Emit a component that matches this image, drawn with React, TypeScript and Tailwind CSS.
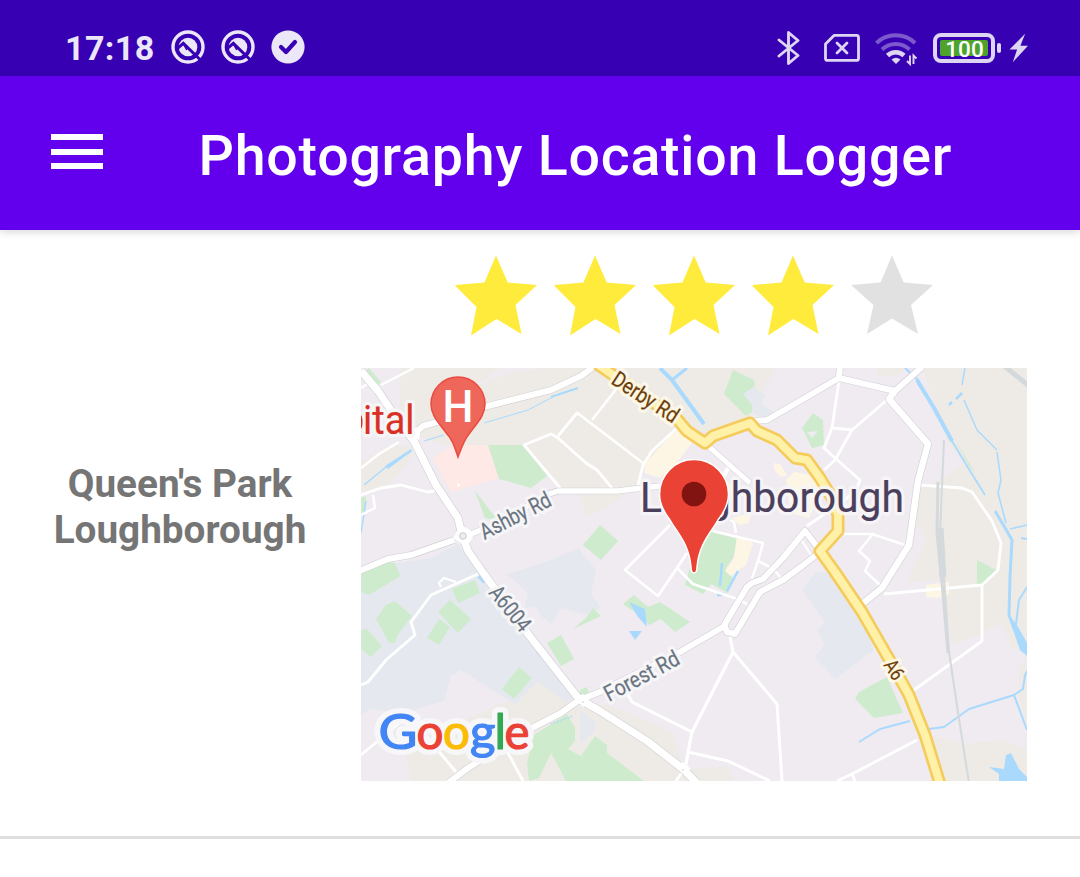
import React from "react";

type Line = { d: string; w: number };

const minorRoads: Line[] = [
  { d: "20,17 53,0", w: 2.5 },
  { d: "0,20 8,15", w: 2.5 },
  { d: "0,100 18,86 38,74", w: 2.5 },
  { d: "0,127 20,120 40,117 67,124 78,122", w: 2.8 },
  { d: "12,127 14,140 0,147", w: 2.5 },
  { d: "200,121 163,77 190,66 197,70 225,95 236,102 251,120", w: 2.8 },
  { d: "197,68 216,45 219,47 282,95", w: 2.8 },
  { d: "231,52 256,20", w: 2.5 },
  { d: "316,60 291,83 282,97 277,117", w: 2.8 },
  { d: "478,13 471,60 463,80 474,90 499,112 496,120 484,132 446,158", w: 2.8 },
  { d: "471,60 491,62 526,32", w: 2.8 },
  { d: "491,62 474,92 463,102", w: 2.8 },
  { d: "483,166 511,166 544,177", w: 2.5 },
  { d: "511,167 498,183 509,193 504,203 519,217", w: 2.5 },
  { d: "559,117 601,120 611,124 631,153 640,175 637,202 621,217 523,226", w: 2.8 },
  { d: "621,217 621,273 553,322", w: 2.8 },
  { d: "556,372 491,406 476,413", w: 2.8 },
  { d: "491,406 494,413", w: 2.8 },
  { d: "367,100 362,110", w: 4 },
  { d: "309,157 264,202 297,228 316,200 326,185", w: 2.8 },
  { d: "316,200 332,216 376,231 386,236", w: 2.8 },
  { d: "352,163 402,175 397,193 411,200", w: 2.5 },
  { d: "397,193 389,216", w: 2.5 },
  { d: "369,152 373,154 375,165", w: 2.5 },
  { d: "414,203 421,211", w: 2.5 },
  { d: "441,173 450,187", w: 2 },
  { d: "369,269 372,284 331,364 327,384 325,397", w: 3.2 },
  { d: "372,284 416,336 421,413", w: 3 },
  { d: "327,384 367,393 409,413", w: 3 },
  { d: "266,325 271,334 331,364", w: 3 },
  { d: "322,403 315,413", w: 3 },
  { d: "117,206 70,227 50,254 54,267 25,292 7,314 0,317", w: 2.8 },
  { d: "80,219 78,215 83,210 95,214", w: 2.3 },
  { d: "0,387 43,351 60,362 95,404", w: 2.8 },
  { d: "145,381 162,413", w: 2.8 },
];

const majorRoads: Line[] = [
  { d: "0,3 17,23 40,57 53,73 75,117 97,150 101,167 107,183 123,206 167,266 218,331 239,343 286,373 322,401 336,415", w: 7.4 },
  { d: "53,66 62,58 73,55 127,38 190,22 220,8 232,-1", w: 6 },
  { d: "-2,203 27,191 50,187 93,172", w: 6 },
  { d: "110,166 130,158 188,126 197,123 256,123 299,118", w: 5.5 },
  { d: "394,53 406,52 444,30 478,10 479,-2", w: 6 },
  { d: "478,10 534,23 561,-1", w: 6 },
  { d: "534,23 528,31 567,76 557,113 548,177 526,212 521,220 501,236", w: 6.5 },
  { d: "347,78 389,115", w: 5 },
  { d: "87,415 107,400 167,362 200,345 218,332 239,324 319,284 362,259 386,219 391,215 402,211 422,190 444,163 458,181", w: 6 },
  { d: "363,256 366,264 374,266 399,224 422,212 441,198 459,184", w: 6 },
];

const rivers: Line[] = [
  { d: "544,0 558,13", w: 2 },
  { d: "556,12 573,40 591,73", w: 4 },
  { d: "588,68 606,98 624,127", w: 1.8 },
  { d: "634,143 643,158 651,172 649,209 648,247 661,282 668,286", w: 3 },
  { d: "604,0 601,17", w: 1.5 },
  { d: "601,25 595,31", w: 2.5 },
  { d: "591,34 588,37", w: 2.5 },
  { d: "603,32 616,62 636,82", w: 1.4 },
  { d: "636,84 640,112 637,125 645,155", w: 1.6 },
  { d: "649,161 666,157", w: 1.6 },
  { d: "660,170 666,171", w: 2 },
  { d: "666,219 658,232 654,264", w: 2 },
  { d: "498,374 519,361 549,353", w: 2 },
  { d: "568,361 583,359 608,341 653,327 662,321 664,307 667,302", w: 2 },
  { d: "653,327 666,362", w: 2 },
  { d: "299,0 311,12 343,56", w: 4 },
  { d: "311,12 326,0", w: 3 },
  { d: "3,117 25,99 50,83", w: 1.5 },
  { d: "63,73 83,67", w: 1.2 },
  { d: "123,55 167,42 192,29", w: 1 },
  { d: "190,29 217,20", w: 2 },
  { d: "5,133 0,165", w: 1.5 },
  { d: "118,208 124,214", w: 4 },
  { d: "176,283 183,290", w: 3 },
  { d: "361,195 359,218", w: 2.5 },
  { d: "377,203 366,223", w: 2.5 },
  { d: "356,227 364,226", w: 3 },
];

const beige = [
  "40,48 90,30 110,20 150,5 180,0 415,0 402,22 395,45 345,80 318,62 283,97 276,117 245,140 225,148 217,125 200,123 165,77 120,77 85,78 60,68",
  "8,15 30,45 38,60 40,0 60,0 100,0 140,0 120,14 100,20 80,35 50,56 30,45",
  "0,95 30,77 53,80 45,98 25,118 0,124",
  "562,0 666,0 666,285 650,280 641,254 618,267 591,277 580,212 545,214 565,172 555,155 555,120 575,113 605,95 590,80 575,45",
  "515,0 545,0 535,8 518,8",
  "666,290 658,300 658,330 666,360",
  "568,367 600,376 641,372 666,382 666,413 578,413",
  "135,337 160,330 177,314 207,334 222,340 245,336 312,364 319,391 322,402 366,398 374,413 50,413 43,380 85,360 120,345",
];

const blueGray = [
  "0,215 30,196 70,190 97,176 108,192 123,210 167,270 212,330 205,334 177,314 160,330 155,337 100,302 90,308 83,333 40,345 8,341 0,348",
  "157,203 190,192 217,180 235,202 230,226 240,240 226,247 200,240 190,256 180,248 174,238 163,240 167,226 155,214 145,206",
  "455,204 477,204 501,250 513,282 474,311 454,289 464,276 456,263 464,254 441,222",
  "379,26 386,14 404,27 400,35 413,45 400,50 380,34",
  "219,343 235,354 233,364 219,376",
];

const parks = [
  "127,77 163,77 186,108 170,120 138,111",
  "114,123 132,146 137,153 124,150",
  "8,0 20,14 16,18 5,2",
  "372,2 393,12 394,18 382,26 391,37 391,44 385,48 363,26",
  "441,60 452,45 462,52 463,77 451,80",
  "239,157 257,173 240,192 222,177",
  "0,200 20,193 34,195 39,208 33,212 8,227 0,224",
  "15,251 25,237 34,233 51,248 36,268 34,275 28,275",
  "0,262 6,261 21,278 10,289 0,281",
  "91,221 114,212 119,225 97,235",
  "77,244 89,232 110,251 97,265",
  "78,251 89,259 78,277 66,270",
  "141,321 158,299 171,310 153,331",
  "186,275 200,267 213,291 200,298",
  "212,261 240,248 232,240 225,250",
  "262,236 273,227 287,239 299,234 329,254 314,264 300,251 288,257 282,250",
  "335,160 377,171 372,190 365,200 372,211 367,225 350,216 342,226 324,217 332,188",
  "494,331 498,324 526,309 537,334 542,345 513,350",
  "616,192 637,203 620,217 616,219",
  "595,74 615,106 608,98",
  "219,322 226,319 228,326 219,328",
  "173,367 206,346 214,360 214,373 207,381 220,388 234,368 246,377 246,385 283,413 205,413 190,385 178,410 168,413 166,395",
  "0,130 5,128 4,144 0,146",
];

const cream = [
  "316,60 331,75 315,96 299,110 284,105 283,97 298,80",
  "413,95 419,96 426,107 420,109 413,102",
  "376,167 392,175 385,197 370,208 364,203 373,190",
  "425,112 433,104 455,108 460,125 448,150 430,145",
  "565,217 588,214 588,226 576,230 565,229",
  "352,97 375,123 369,130 345,111",
  "371,150 390,145 388,155 378,157",
];

function StatusCircle() {
  return (
    <svg className="size-[34px]" viewBox="0 0 34 34" fill="none">
      <circle cx="17" cy="17" r="15" stroke="#ece7f8" strokeWidth="3.400" />
      <circle cx="17" cy="17" r="9.300" fill="#ece7f8" />
      <path d="M6.500 18.300 12.300 13.300 29 29.500" stroke="#3700b3" strokeWidth="3" />
      <path d="m12.300 13.300 3.500 6.500" stroke="#3700b3" strokeWidth="1.600" />
    </svg>
  );
}

function StatusBar() {
  return (
    <div className="flex h-[76px] items-start bg-[#3700b3] text-[#ece7f8]">
      <div className="ml-[65px] mt-[28px] w-[106px] whitespace-nowrap text-[34px] leading-[40px] font-bold tracking-[0.4px]">17:18</div>
      <div className="mt-[30px] flex gap-4">
        <StatusCircle />
        <StatusCircle />
        <svg className="size-[34px]" viewBox="0 0 34 34" fill="none">
          <circle cx="17" cy="17" r="16.600" fill="#ece7f8" />
          <path d="m10 17 5 5 9-10" stroke="#3700b3" strokeWidth="4.200" strokeLinecap="round" strokeLinejoin="round" />
        </svg>
      </div>
      <div className="ml-auto mr-[52px] mt-[30px] flex h-9 items-center text-[#ded5f3]">
        <svg className="h-9 w-6" viewBox="0 0 24 36" fill="none" stroke="currentColor" strokeWidth="2.900" strokeLinejoin="round" strokeLinecap="round">
          <path d="m2 10 19 15.500-9.500 8V2.500l9.500 8L2 26" />
        </svg>
        <svg className="ml-[23px] h-7 w-9" viewBox="0 0 36 28" fill="none" stroke="currentColor" strokeWidth="2.800" strokeLinecap="round">
          <path d="M10 1.400h22.500q2 0 2 2v21q0 2-2 2h-29q-2 0-2-2V10z" strokeLinejoin="round" />
          <path d="m13 9 10 10m0-10L13 19" />
        </svg>
        <svg className="ml-[14px] h-[36px] w-[44px]" viewBox="0 0 44 36" fill="none" stroke="currentColor" strokeWidth="4">
          <g opacity=".42">
            <path d="M2.500 13a28 28 0 0 1 38.500 0" />
            <path d="M8 19.500a20 20 0 0 1 27.500 0" />
          </g>
          <path d="M13.500 25.500a12 12 0 0 1 16.500 0" strokeWidth="4.500" />
          <path d="M17.500 29.500q4.500-3.500 9 0l-4.500 4.500z" fill="currentColor" stroke="none" />
          <path d="M36 25.500v8.500l-3-3M39.500 34v-8.500l3 3" strokeWidth="1.900" />
        </svg>
        <div className="ml-[15px] flex h-[30px] w-[62px] rounded-[8px] border-4 border-current p-[3px]">
          <div className="flex w-full items-center justify-center rounded-[2px] bg-[#4da32c] pl-px pt-[2px] text-[22.5px] leading-none font-medium text-white">100</div>
        </div>
        <div className="ml-[2px] h-[10px] w-1 rounded-full bg-current" />
        <svg className="ml-[8px] h-[30px] w-[19px]" viewBox="0 0 20 30" fill="currentColor">
          <path d="M17 0 .5 16.500h8L4 30 20 12.500h-8z" />
        </svg>
      </div>
    </div>
  );
}

function AppBar() {
  return (
    <header className="flex h-[154px] items-start bg-[#6200ee] shadow-[0_2px_8px_rgba(0,0,0,0.16)]">
      <div className="ml-[51px] mt-[58px] flex w-[52px] flex-col gap-[8.5px]">
        <div className="h-[6px] bg-white" />
        <div className="h-[6px] bg-white" />
        <div className="h-[6px] bg-white" />
      </div>
      <h1 className="ml-[95.5px] mt-[49px] whitespace-nowrap text-[55.5px] leading-[64px] font-medium tracking-[0.76px] text-white">
        Photography Location Logger
      </h1>
    </header>
  );
}

function Star({ filled }: { filled: boolean }) {
  return (
    <svg className="h-[82px] w-[99px]" viewBox="0 0 99 82" fill={filled ? "#ffeb3b" : "#e1e1e1"}>
      <path
        d={
          filled
            ? "M49 .5 60.700 27.500 90 30 68.500 50 74.500 79 49.500 64 24 80.500 29.500 52 8.500 31v-1L37.500 27.500z"
            : "M49 .5 60.700 27.500 90 30 68 50 75 79 49 63.500 24 79 30.500 50 8 30 37.500 27.500z"
        }
      />
    </svg>
  );
}

function Lines({ items, stroke, extra = 0 }: { items: Line[]; stroke: string; extra?: number }) {
  return (
    <g fill="none" stroke={stroke} strokeLinejoin="round">
      {items.map((l) => (
        <polyline key={l.d} points={l.d} strokeWidth={l.w + extra} />
      ))}
    </g>
  );
}

function Areas({ items, fill }: { items: string[]; fill: string }) {
  return (
    <g fill={fill}>
      {items.map((p) => (
        <polygon key={p} points={p} />
      ))}
    </g>
  );
}

const a6 =
  "236,-4 316,51 326,63 344,75 352,68 389,55 396,63 416,72 434,90 446,92 459,110 471,130 477,147 477,163 459,183 474,204 501,244 528,291 548,327 564,367 579,416";

type Label = {
  text: string;
  at: string;
  width: number;
  size: number;
  fill: string;
  halo: string;
};

const labels: Label[] = [
  { text: "Ashby Rd", at: "translate(123.5 172) rotate(-27)", width: 77, size: 22.5, fill: "#6a7480", halo: "#f7f7f9" },
  { text: "Forest Rd", at: "translate(248 334) rotate(-28)", width: 82, size: 22.5, fill: "#6a7480", halo: "#f7f7f9" },
  { text: "A6004", at: "translate(127 225) rotate(51)", width: 52, size: 22, fill: "#6a7480", halo: "#f7f7f9" },
  { text: "Derby Rd", at: "translate(249 15) rotate(33)", width: 75, size: 22, fill: "#6c3e0c", halo: "#fffaea" },
  { text: "A6", at: "translate(522 297) rotate(57)", width: 20, size: 20, fill: "#6c3e0c", halo: "#fffaea" },
  { text: "Loughborough", at: "translate(279 144)", width: 264, size: 43, fill: "#4b3f5d", halo: "#f7f6f8" },
  { text: "ital", at: "translate(2 65.500)", width: 51.5, size: 40, fill: "#d93025", halo: "#f7f6f8" },
];

type Letter = { ch: string; x: number; w: number; color: string };

const logo: Letter[] = [
  { ch: "G", x: 17.5, w: 39, color: "#4285f4" },
  { ch: "o", x: 55.5, w: 27, color: "#ea4335" },
  { ch: "o", x: 82, w: 27, color: "#fbbc05" },
  { ch: "g", x: 109, w: 25.5, color: "#4285f4" },
  { ch: "l", x: 133.5, w: 11.5, color: "#34a853" },
  { ch: "e", x: 143.5, w: 25, color: "#ea4335" },
];

function MapView() {
  return (
    <svg className="h-[413px] w-[666px] font-[Roboto,sans-serif]" viewBox="0 0 666 413">
      <rect width="666" height="413" fill="#efebf0" />
      <Areas items={beige} fill="#eeebe6" />
      <Areas items={blueGray} fill="#e5e9ef" />
      <polygon points="72,90 92,77 127,77 138,110 90,124" fill="#ffe9e6" />
      <Areas items={parks} fill="#ceebce" />
      <Areas items={cream} fill="#fef6e4" />
      <polygon points="446,64 457,63 451,70" fill="#efebf0" />
      <Lines items={rivers} stroke="#a9dafe" />
      <g fill="#a9dafe">
        <polygon points="24,98 50,81 51,83 27,101" />
        <polygon points="268,234 284,241 286,259 277,249" />
        <polygon points="268,263 281,263 274,272" />
        <polygon points="628,399 643,401 645,387 650,385 658,401 666,409 666,413 638,413 638,406" />
        <polygon points="648,247 656,257 666,275 666,288 659,282" />
      </g>
      <path d="M190 356l22-8" stroke="#a9dafe" strokeWidth="1.500" strokeDasharray="1.500 1.500" />
      <Lines items={minorRoads} stroke="#ffffff" />
      <g fill="none" stroke="#d4d9db">
        <polyline points="583,72 579,165 583,209 588,284 598,351 608,415" strokeWidth="2" />
        <polyline points="577,114 576,165 582,225 587,285" strokeWidth="3" />
        <polyline points="579,160 582,209" strokeWidth="7" />
        <polyline points="642,-3 668,18" strokeWidth="5" />
      </g>
      <Lines items={majorRoads} stroke="#d0d0d5" extra={1.2} />
      <Lines items={majorRoads} stroke="#ffffff" />
      <path d="M51 60 60 59 58 72 50 68zM92 170l8-13 14 8-8 14zM214 330l8-4 7 7-7 6zM314 397l8-3 8 7-7 5z" fill="white" />
      <circle cx="102" cy="168" r="7" fill="white" />
      <circle cx="102" cy="168" r="3.300" fill="#efebf0" stroke="#c8c8ce" />
      <circle cx="222" cy="334" r=".8" fill="#c8c8ce" />
      <circle cx="322" cy="402" r=".8" fill="#c8c8ce" />
      <circle cx="97.500" cy="117" r="1.500" fill="white" />
      <g fill="none" strokeLinejoin="round">
        <polyline points={a6} stroke="#f5cb5c" strokeWidth="13" />
        <polyline points={a6} stroke="#fff1a8" strokeWidth="7.800" />
      </g>

      {labels.map((l) => (
        <g key={l.text} transform={l.at} fontSize={l.size}>
          <text aria-hidden="true" textLength={l.width} lengthAdjust="spacingAndGlyphs" fill={l.halo} stroke={l.halo} strokeWidth="7" strokeLinejoin="round" opacity=".88">{l.text}</text>
          <text textLength={l.width} lengthAdjust="spacingAndGlyphs" fill={l.fill} stroke={l.fill} strokeWidth=".2">{l.text}</text>
        </g>
      ))}
      <path d="M0 47q1.500 2 1.500 7t-1.500 7z" fill="#d93025" />

      <path d="M97 89C93 77 91 71 86 66C78 55 70 48 70 36a27 27 0 0 1 54 0C124 48 116 55 108 66C103 72 101 78 97 89z" fill="#ef665b" stroke="#e94b3f" strokeWidth="1.500" />
      <text x="97" y="54" textAnchor="middle" fontSize="45" fontWeight="500" textLength="31" lengthAdjust="spacingAndGlyphs" fill="white">H</text>

      <path d="M333 205q-3 0-3-6C328 176 317 166 309 152C302 143 298.500 134 298.500 126a34.500 34.500 0 0 1 69 0C367.500 134 364 143 357 152C349 166 338 176 336 199q0 6-3 6z" fill="#ea4335" stroke="white" strokeWidth="1.500" />
      <circle cx="333" cy="126" r="12.300" fill="#811411" />

      <g className="font-[Lato,sans-serif]" fontSize="48" strokeLinejoin="round">
        {logo.map((l) => (
          <text key={"halo" + l.x} aria-hidden="true" x={l.x} y="381" textLength={l.w} lengthAdjust="spacingAndGlyphs" fill="#f7f6f8" stroke="#f7f6f8" strokeWidth="12">{l.ch}</text>
        ))}
        {logo.map((l) => (
          <text key={l.x} x={l.x} y="381" textLength={l.w} lengthAdjust="spacingAndGlyphs" fill={l.color} stroke={l.color} strokeWidth="1.200">{l.ch}</text>
        ))}
      </g>
    </svg>
  );
}

export default function App() {
  return (
    <div className="flex h-[877px] w-[1080px] flex-col overflow-hidden bg-white font-[Roboto,sans-serif]">
      <StatusBar />
      <AppBar />
      <main className="flex h-[609px] border-b-[3px] border-[#dfdfdf]">
        <div className="flex w-[361px] items-center justify-center pb-[52px] pr-px text-center text-[38.7px] leading-[46px] font-bold text-[#757575]">
          <p>
            Queen's Park
            <br />
            Loughborough
          </p>
        </div>
        <div className="flex w-[666px] flex-col pt-[25px]">
          <div className="mb-[31px] flex pl-[86px]">
            {[1, 2, 3, 4, 5].map((n) => (
              <Star key={n} filled={n <= 4} />
            ))}
          </div>
          <MapView />
        </div>
      </main>
    </div>
  );
}
